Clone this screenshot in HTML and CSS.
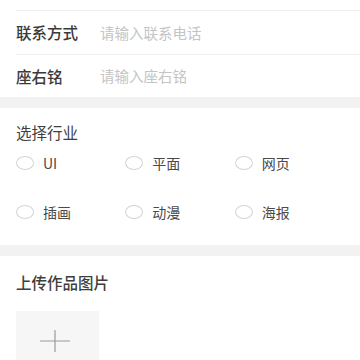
FILE: index.html
```html
<!DOCTYPE html>
<html lang="zh">
<head>
<meta charset="utf-8">
<link rel="stylesheet" href="styles.css">
</head>
<body>
<div class="page">
  <div class="top-spacer"></div>
  <div class="form-group">
    <div class="field">
      <span class="field-label">联系方式</span>
      <span class="field-input">请输入联系电话</span>
    </div>
    <div class="field">
      <span class="field-label">座右铭</span>
      <span class="field-input">请输入座右铭</span>
    </div>
  </div>
  <div class="band"></div>
  <div class="section industry">
    <div class="section-title">选择行业</div>
    <div class="radio-grid">
      <label class="radio"><span class="circle"></span><span class="radio-text">UI</span></label>
      <label class="radio"><span class="circle"></span><span class="radio-text">平面</span></label>
      <label class="radio"><span class="circle"></span><span class="radio-text">网页</span></label>
      <label class="radio"><span class="circle"></span><span class="radio-text">插画</span></label>
      <label class="radio"><span class="circle"></span><span class="radio-text">动漫</span></label>
      <label class="radio"><span class="circle"></span><span class="radio-text">海报</span></label>
    </div>
  </div>
  <div class="band"></div>
  <div class="section upload">
    <div class="section-title strong">上传作品图片</div>
    <div class="upload-box">
      <svg width="30" height="22" viewBox="0 0 30 22"><path d="M0 11H30M15 0V22" stroke="#9a9a9a" stroke-width="1.2" fill="none"/></svg>
    </div>
  </div>
</div>
</body>
</html>
```
FILE: styles.css
```css
* { box-sizing: border-box; }
html, body { margin: 0; padding: 0; background: #fff; }
body {
  font-family: "Noto Sans CJK SC", "Noto Sans", sans-serif;
  color: #333;
  width: 360px;
  height: 360px;
  overflow: hidden;
}
.page { display: flex; flex-direction: column; height: 360px; overflow: hidden; }
.top-spacer { height: 10px; flex: none; }
.form-group { padding-left: 16px; flex: none; }
.field {
  height: 43.5px;
  display: flex;
  align-items: center;
  border-top: 1px solid #efefef;
}
.field-label {
  width: 84px;
  font-size: 15.5px;
  font-weight: 500;
  color: #3a3a3a;
}
.field-input {
  font-size: 14.5px;
  color: #c4c4c4;
}
.band { height: 11px; background: #f2f2f2; flex: none; }
.section { padding: 0 16px; flex: none; }
.section-title {
  font-size: 15.5px;
  color: #3f3f3f;
  line-height: 22px;
}
.section-title.strong { font-weight: 500; }
.industry { padding-top: 13px; height: 137px; }
.radio-grid {
  margin-top: 9px;
  display: grid;
  grid-template-columns: repeat(3, 1fr);
  row-gap: 27px;
}
.radio {
  display: flex;
  align-items: center;
  height: 22px;
}
.circle {
  width: 18px;
  height: 14px;
  border: 1px solid #d4d4d4;
  border-radius: 50%;
  margin-right: 9px;
}
.radio-text {
  font-size: 14px;
  color: #4a4a4a;
}
.upload { padding-top: 15px; }
.upload-box {
  margin-top: 18px;
  width: 83px;
  height: 70px;
  background: #f6f6f6;
  display: flex;
  align-items: center;
  justify-content: center;
  padding-bottom: 10px;
  padding-right: 5px;
}
```
